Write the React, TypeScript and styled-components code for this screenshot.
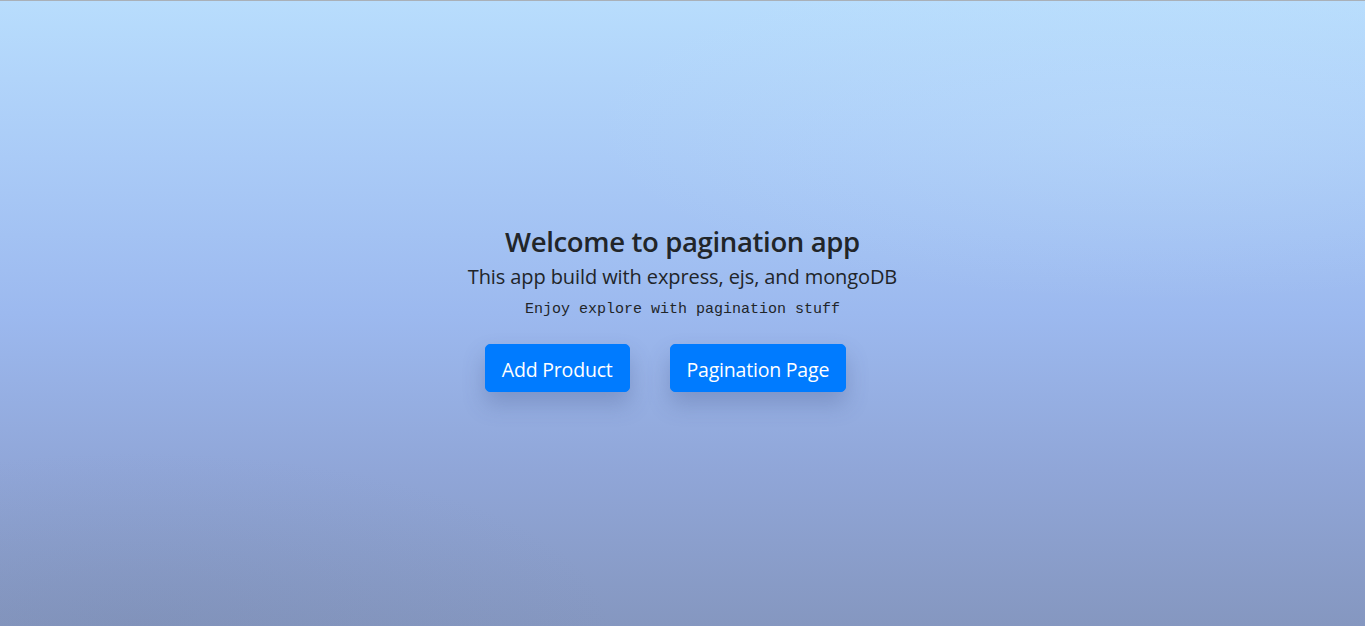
import React from "react";
import styled, { createGlobalStyle } from "styled-components";

const Global = createGlobalStyle`
  html, body { margin: 0; padding: 0; height: 100%; }
  body {
    font-family: "Open Sans", "Noto Sans", sans-serif;
    color: #212529;
  }
  #root { height: 100%; }
`;

const Page = styled.main`
  box-sizing: border-box;
  height: 626px;
  border-top: 1px solid #a9b0b8;
  background:
    radial-gradient(ellipse 60% 40% at 85% 20%, rgba(200, 230, 255, 0.25), rgba(200, 230, 255, 0) 70%),
    radial-gradient(ellipse 50% 40% at 10% 100%, rgba(110, 125, 160, 0.18), rgba(110, 125, 160, 0) 70%),
    linear-gradient(to bottom, #b8ddfd 0%, #aacbf7 25%, #9cb9ef 50%, #90a6d8 75%, #8597c0 100%);
  display: flex;
  flex-direction: column;
  align-items: center;
  justify-content: center;
  padding-bottom: 11px;
`;

const Title = styled.h1`
  margin: 0;
  font-size: 27.5px;
  font-weight: 600;
  line-height: 1.2;
  letter-spacing: -0.35px;
`;

const Subtitle = styled.h2`
  margin: 6px 0 0;
  font-size: 20px;
  font-weight: 500;
  line-height: 1.25;
  letter-spacing: -0.1px;
`;

const Tagline = styled.p`
  margin: 12px 0 0;
  font-family: "Liberation Mono", "DejaVu Sans Mono", monospace;
  font-size: 15px;
  line-height: 1.2;
`;

const Actions = styled.div`
  display: flex;
  gap: 40px;
  margin-top: 25px;
  padding-right: 34px;
`;

const Button = styled.a`
  display: inline-block;
  background: #007bff;
  color: #fff;
  border: 1px solid #007bff;
  border-radius: 5px;
  padding: 3px 16px 0;
  height: 48px;
  box-sizing: border-box;
  line-height: 43px;
  font-size: 19.5px;
  text-decoration: none;
  box-shadow: 0 12px 22px rgba(60, 80, 130, 0.28);
  letter-spacing: -0.2px;
`;

export default function App() {
  return (
    <>
      <Global />
      <Page>
        <Title>Welcome to pagination app</Title>
        <Subtitle>This app build with express, ejs, and mongoDB</Subtitle>
        <Tagline>Enjoy explore with pagination stuff</Tagline>
        <Actions>
          <Button href="#">Add Product</Button>
          <Button href="#">Pagination Page</Button>
        </Actions>
      </Page>
    </>
  );
}
